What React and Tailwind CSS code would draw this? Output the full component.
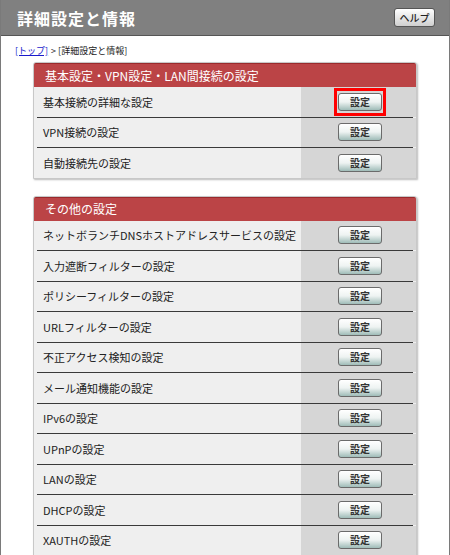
import React from 'react';

const basic = ['基本接続の詳細な設定', 'VPN接続の設定', '自動接続先の設定'];
const others = [
  'ネットボランチDNSホストアドレスサービスの設定',
  '入力遮断フィルターの設定',
  'ポリシーフィルターの設定',
  'URLフィルターの設定',
  '不正アクセス検知の設定',
  'メール通知機能の設定',
  'IPv6の設定',
  'UPnPの設定',
  'LANの設定',
  'DHCPの設定',
  'XAUTHの設定',
];

const SetButton = ({ highlight }) => (
  <div className={highlight ? 'border-[3px] border-[#ff0000] px-[1px] py-[2px]' : 'border-[3px] border-transparent px-[1px] py-[2px]'}>
    <button className="flex h-[18px] w-[44px] items-center justify-center rounded-[3px] border border-[#6b6b6b] bg-gradient-to-b from-white via-[#eef3f2] to-[#9fbcb8] text-[10px] font-bold leading-none text-[#333] shadow-[inset_0_1px_0_#fff]">
      設定
    </button>
  </div>
);

const Panel = ({ title, items, highlightFirst }) => (
  <div className="mx-[32px] rounded-t-[3px] border border-[#c8c8c8] bg-[#efefef] shadow-[1px_1px_2px_#bbb]">
    <div className="flex h-[24px] items-center rounded-t-[2px] border-t border-[#9a2a2c] bg-[#bb4446] pl-[11px] text-[12px] text-white">
      {title}
    </div>
    {items.map((label, i) => (
      <div key={label} className={i === 0 ? 'px-0' : 'border-t border-[#3a3a3a] mx-[3px]'}>
        <div className={i === 0 ? 'flex h-[29.5px] items-stretch' : 'flex h-[29.5px] items-stretch -mx-[3px]'}>
          <div className="flex flex-1 items-center pl-[9px] text-[11px] text-[#222]">{label}</div>
          <div className="flex w-[115px] items-center justify-center bg-[#d6d6d6] pl-[3px]">
            <SetButton highlight={highlightFirst && i === 0} />
          </div>
        </div>
      </div>
    ))}
  </div>
);

export default function App() {
  return (
    <div
      className="h-[555px] w-[450px] overflow-hidden border-x border-[#7a7a7a] bg-white"
      style={{ fontFamily: '"Noto Sans CJK JP", "Noto Sans", sans-serif' }}
    >
      <div className="flex h-[36px] items-center justify-between border-b border-[#555] bg-[#808080] pl-[16px] pr-[14px]">
        <h1 className="text-[16px] font-bold tracking-[1px] text-white">詳細設定と情報</h1>
        <button className="flex h-[19px] w-[41px] items-center justify-center rounded-[3px] border border-[#555] bg-gradient-to-b from-white to-[#cfcfcf] text-[10px] font-medium text-[#222]">
          ヘルプ
        </button>
      </div>
      <div className="flex h-[26px] items-center pl-[14px] pt-[3px] text-[9px] text-[#222]">
        <a className="text-[#1a1acc] underline">[トップ]</a>
        <span className="ml-[3px]">&gt; [詳細設定と情報]</span>
      </div>
      <Panel title="基本設定・VPN設定・LAN間接続の設定" items={basic} highlightFirst />
      <div className="h-[17px]" />
      <Panel title="その他の設定" items={others} />
    </div>
  );
}
